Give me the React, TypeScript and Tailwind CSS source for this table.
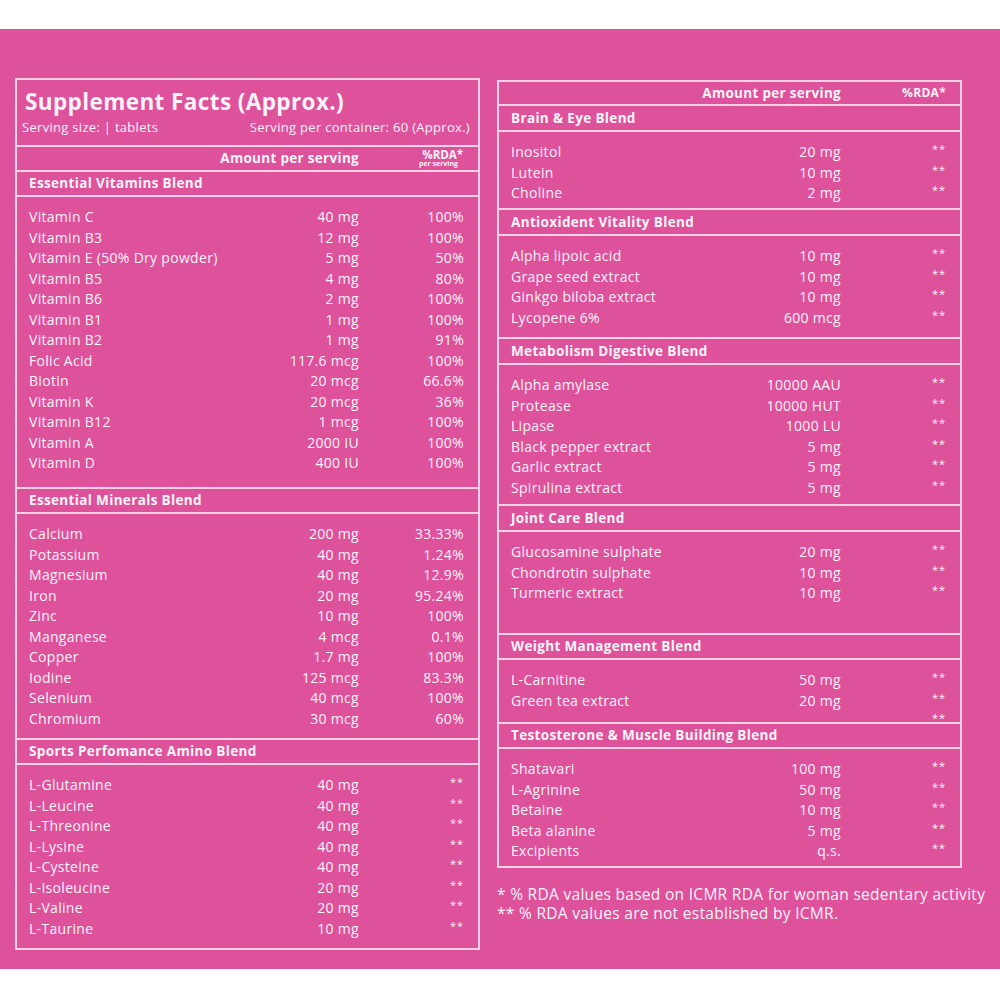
import React from "react";

type Row = [string, string, string];

const vitamins: Row[] = [
  ["Vitamin C", "40 mg", "100%"],
  ["Vitamin B3", "12 mg", "100%"],
  ["Vitamin E (50% Dry powder)", "5 mg", "50%"],
  ["Vitamin B5", "4 mg", "80%"],
  ["Vitamin B6", "2 mg", "100%"],
  ["Vitamin B1", "1 mg", "100%"],
  ["Vitamin B2", "1 mg", "91%"],
  ["Folic Acid", "117.6 mcg", "100%"],
  ["Biotin", "20 mcg", "66.6%"],
  ["Vitamin K", "20 mcg", "36%"],
  ["Vitamin B12", "1 mcg", "100%"],
  ["Vitamin A", "2000 IU", "100%"],
  ["Vitamin D", "400 IU", "100%"],
];

const minerals: Row[] = [
  ["Calcium", "200 mg", "33.33%"],
  ["Potassium", "40 mg", "1.24%"],
  ["Magnesium", "40 mg", "12.9%"],
  ["Iron", "20 mg", "95.24%"],
  ["Zinc", "10 mg", "100%"],
  ["Manganese", "4 mcg", "0.1%"],
  ["Copper", "1.7 mg", "100%"],
  ["Iodine", "125 mcg", "83.3%"],
  ["Selenium", "40 mcg", "100%"],
  ["Chromium", "30 mcg", "60%"],
];

const amino: Row[] = [
  ["L-Glutamine", "40 mg", "**"],
  ["L-Leucine", "40 mg", "**"],
  ["L-Threonine", "40 mg", "**"],
  ["L-Lysine", "40 mg", "**"],
  ["L-Cysteine", "40 mg", "**"],
  ["L-Isoleucine", "20 mg", "**"],
  ["L-Valine", "20 mg", "**"],
  ["L-Taurine", "10 mg", "**"],
];

const brain: Row[] = [
  ["Inositol", "20 mg", "**"],
  ["Lutein", "10 mg", "**"],
  ["Choline", "2 mg", "**"],
];

const antiox: Row[] = [
  ["Alpha lipoic acid", "10 mg", "**"],
  ["Grape seed extract", "10 mg", "**"],
  ["Ginkgo biloba extract", "10 mg", "**"],
  ["Lycopene 6%", "600 mcg", "**"],
];

const metab: Row[] = [
  ["Alpha amylase", "10000 AAU", "**"],
  ["Protease", "10000 HUT", "**"],
  ["Lipase", "1000 LU", "**"],
  ["Black pepper extract", "5 mg", "**"],
  ["Garlic extract", "5 mg", "**"],
  ["Spirulina extract", "5 mg", "**"],
];

const joint: Row[] = [
  ["Glucosamine sulphate", "20 mg", "**"],
  ["Chondrotin sulphate", "10 mg", "**"],
  ["Turmeric extract", "10 mg", "**"],
];

const weight: Row[] = [
  ["L-Carnitine", "50 mg", "**"],
  ["Green tea extract", "20 mg", "**"],
  ["", "", "**"],
];

const testo: Row[] = [
  ["Shatavari", "100 mg", "**"],
  ["L-Agrinine", "50 mg", "**"],
  ["Betaine", "10 mg", "**"],
  ["Beta alanine", "5 mg", "**"],
  ["Excipients", "q.s.", "**"],
];

function Rows({ rows, h }: { rows: Row[]; h: string }) {
  return (
    <div className={`border-t-2 border-[#F8D2E6] pt-[10px] overflow-hidden ${h}`}>
      {rows.map((r, i) => (
        <div
          key={i}
          className="flex h-[20.5px] items-center pl-[12px] pr-[14px] text-[14px] tracking-[0.3px] leading-[20.5px]"
        >
          <div className="flex-1 whitespace-nowrap">{r[0]}</div>
          <div className="whitespace-nowrap text-right">{r[1]}</div>
          <div
            className={`w-[105px] text-right whitespace-nowrap ${
              r[2] === "**" ? "text-[11px] self-start leading-[14px] tracking-[1px]" : ""
            }`}
          >
            {r[2]}
          </div>
        </div>
      ))}
    </div>
  );
}

function BlendHead({ title, h }: { title: string; h: string }) {
  return (
    <div
      className={`border-t-2 border-[#F8D2E6] flex items-center pl-[12px] text-[13.5px] tracking-[0.35px] font-bold ${h}`}
    >
      {title}
    </div>
  );
}

export default function App() {
  return (
    <div className="w-[1000px] h-[1000px] bg-white pt-[29px] font-['Open_Sans','Noto_Sans',sans-serif] text-[#FFF4FA]">
      <div className="h-[940px] bg-[#DE519B] flex items-start">
        {/* Left panel */}
        <div className="ml-[15px] mt-[49px] w-[465px] border-2 border-[#F8D2E6] flex flex-col">
          <div className="h-[65px] pl-[5px] pr-[8px] flex flex-col">
            <div className="pl-[3px] pt-[7px] text-[22.5px] tracking-[0.4px] font-bold leading-[30px]">
              Supplement Facts (Approx.)
            </div>
            <div className="mt-[2px] flex justify-between text-[13px] tracking-[0.3px] leading-[16px]">
              <span>Serving size: | tablets</span>
              <span>Serving per container: 60 (Approx.)</span>
            </div>
          </div>
          <div className="h-[25px] border-t-2 border-[#F8D2E6] flex items-center pr-[14px]">
            <div className="flex-1 text-right text-[13.5px] tracking-[0.3px] font-bold">Amount per serving</div>
            <div className="w-[105px] flex flex-col items-end font-bold">
              <span className="text-[11.5px] leading-[11px] pr-[1px]">%RDA*</span>
              <span className="text-[7px] leading-[8px] pr-[6px]">per serving</span>
            </div>
          </div>
          <BlendHead title="Essential Vitamins Blend" h="h-[25px]" />
          <Rows rows={vitamins} h="h-[292px]" />
          <BlendHead title="Essential Minerals Blend" h="h-[25px]" />
          <Rows rows={minerals} h="h-[226px]" />
          <BlendHead title="Sports Perfomance Amino Blend" h="h-[25px]" />
          <Rows rows={amino} h="h-[185px]" />
        </div>

        {/* Right panel */}
        <div className="ml-[17px] mt-[51px] w-[465px] flex flex-col">
          <div className="border-2 border-[#F8D2E6] flex flex-col">
            <div className="h-[22px] flex items-center pr-[14px] font-bold text-[13.5px] tracking-[0.3px]">
              <div className="flex-1 text-right">Amount per serving</div>
              <div className="w-[105px] text-right text-[12px]">%RDA*</div>
            </div>
            <BlendHead title="Brain & Eye Blend" h="h-[26px]" />
            <Rows rows={brain} h="h-[78px]" />
            <BlendHead title="Antioxident Vitality Blend" h="h-[26px]" />
            <Rows rows={antiox} h="h-[103px]" />
            <BlendHead title="Metabolism Digestive Blend" h="h-[26px]" />
            <Rows rows={metab} h="h-[141px]" />
            <BlendHead title="Joint Care Blend" h="h-[26px]" />
            <Rows rows={joint} h="h-[103px]" />
            <BlendHead title="Weight Management Blend" h="h-[25px]" />
            <Rows rows={weight} h="h-[64px]" />
            <BlendHead title="Testosterone & Muscle Building Blend" h="h-[25px]" />
            <Rows rows={testo} h="h-[119px]" />
          </div>
          <div className="mt-[17px] text-[15.5px] tracking-[0.3px] leading-[18.5px] whitespace-nowrap">
            <div>* % RDA values based on ICMR RDA for woman sedentary activity</div>
            <div>** % RDA values are not established by ICMR.</div>
          </div>
        </div>
      </div>
    </div>
  );
}
